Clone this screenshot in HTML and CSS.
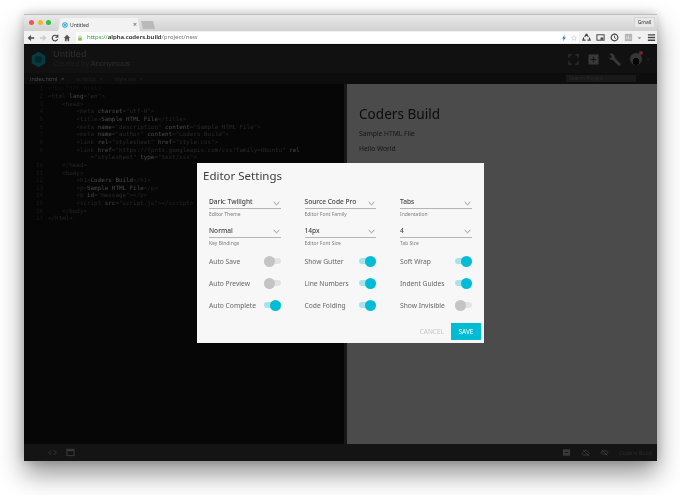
FILE: index.html
```html
<!DOCTYPE html>
<html lang="en">
<head>
<meta charset="utf-8">
<title>Coders Build</title>
<link rel="stylesheet" href="styles.css">
</head>
<body>
<div class="window">
  <div class="tabstrip">
    <div class="lights"><i class="light red"></i><i class="light yellow"></i><i class="light green"></i></div>
    <div class="tab">
      <svg class="favicon" viewBox="0 0 10 10"><circle cx="5" cy="5" r="4.6" fill="#29a9d8"/><circle cx="5" cy="5" r="2.6" fill="none" stroke="#fff" stroke-width="1"/></svg>
      <span class="tab-title">Untitled</span>
      <span class="tab-close">×</span>
    </div>
    <div class="newtab"></div>
    <div class="gmail">Gmail</div>
  </div>
  <div class="toolbar">
    <svg class="nav" viewBox="0 0 10 10"><path d="M9 5H2M5 2 2 5l3 3" fill="none" stroke="#444" stroke-width="1.6"/></svg>
    <svg class="nav" viewBox="0 0 10 10"><path d="M1 5h7M5 2l3 3-3 3" fill="none" stroke="#c8c8c8" stroke-width="1.6"/></svg>
    <svg class="nav" viewBox="0 0 10 10"><path d="M8.300 6.400A3.500 3.500 0 1 1 7.600 2.600M8.500 1v3h-3" fill="none" stroke="#444" stroke-width="1.400"/></svg>
    <svg class="nav" viewBox="0 0 10 10"><path d="M5 1 1 5h1.400v4h2V6.500h1.200V9h2V5H9z" fill="#555"/></svg>
    <div class="url">
      <svg class="lock" viewBox="0 0 10 10"><path d="M3 5V3.400a2 2 0 0 1 4 0V5" fill="none" stroke="#7cb342" stroke-width="1"/><rect x="2" y="4.600" width="6" height="4.800" fill="#8bc34a"/></svg>
      <span class="scheme">https://</span><span class="host">alpha.coders.build</span><span class="path">/project/new</span>
      <span class="url-end">
        <svg class="mini" viewBox="0 0 10 10"><path d="M6 0 2 6h2.400L3.600 10 8 4H5.400z" fill="#1976d2"/></svg>
        <svg class="mini" viewBox="0 0 10 10"><path d="m5 1 1.200 2.700 2.900.3-2.200 1.900.7 2.900L5 7.300 2.400 8.800l.7-2.900L.9 4l2.900-.3z" fill="none" stroke="#bbb" stroke-width=".8"/></svg>
      </span>
    </div>
    <div class="extensions">
      <svg class="ext" viewBox="0 0 10 10"><path d="M5 1 3 4.300M5 1l2 3.300M2 5 1 8h3M8 5l1 3H6" fill="none" stroke="#444" stroke-width="1.300"/></svg>
      <svg class="ext" viewBox="0 0 10 10"><rect x="1" y="2" width="8" height="6" fill="none" stroke="#444" stroke-width="1.100"/><rect x="5" y="5" width="3" height="2.500" fill="#444"/></svg>
      <svg class="ext" viewBox="0 0 10 10"><circle cx="5" cy="5" r="3.700" fill="none" stroke="#444" stroke-width="1.300"/><path d="M5 3v2.300l1.600 1" fill="none" stroke="#444"/></svg>
      <svg class="ext" viewBox="0 0 10 10"><rect x="1" y="1" width="8" height="8" fill="#b4b4b4"/><path d="M3 7V4M5 7V3M7 7V5" stroke="#e2e2e2"/></svg>
      <svg class="ext-caret" viewBox="0 0 6 4"><path d="M1 1h4L3 3.500z" fill="#888"/></svg>
      <svg class="ext" viewBox="0 0 10 10"><path d="M1 2h8M1 5h8M1 8h8" stroke="#444" stroke-width="1.500"/></svg>
    </div>
  </div>
  <div class="app">
    <header class="app-header">
      <svg class="logo" viewBox="0 0 18 18"><path d="M9 .8 16.200 5v8L9 17.200 1.800 13V5z" fill="#083a41"/><circle cx="9" cy="9" r="3.800" fill="#05262b"/></svg>
      <div class="project">
        <div class="project-title">Untitled</div>
        <div class="project-by"><span class="dim">Created by</span> Anonymous</div>
      </div>
      <div class="head-actions">
        <svg class="h-icon" viewBox="0 0 12 12"><path d="M1 4V1h3M8 1h3v3M11 8v3H8M4 11H1V8" fill="none" stroke="#333" stroke-width="1.300"/></svg>
        <svg class="h-icon" viewBox="0 0 12 12"><rect x=".5" y=".5" width="11" height="11" fill="#383838"/><path d="M6 3v6M3 6h6" stroke="#141414" stroke-width="1.200"/></svg>
        <svg class="h-icon wrench" viewBox="0 0 12 12"><path d="M1 .8 3.400 3 3 4.500l-1.500.4L.3 3A3.500 3.500 0 0 0 4.300 6.300L9.200 11.400a1.300 1.300 0 0 0 2-2L6.200 4.400A3.500 3.500 0 0 0 1 .8z" fill="#383838"/></svg>
        <span class="avatar"><i class="dot"></i></span>
        <svg class="h-caret" viewBox="0 0 6 4"><path d="M1 1h4L3 3.500z" fill="#2a2a2a"/></svg>
      </div>
    </header>
    <nav class="filetabs">
      <span class="ft active">index.html <i>×</i></span>
      <span class="ft">script.js <i>×</i></span>
      <span class="ft">style.css <i>×</i></span>
      <span class="searchbox">Search Project</span>
    </nav>
    <main class="workspace">
      <div class="editor">
        <div class="gutter"><span>1</span><span>2</span><span>3</span><span>4</span><span>5</span><span>6</span><span>7</span><span>8</span><span>9</span><span>&nbsp;</span><span>10</span><span>11</span><span>12</span><span>13</span><span>14</span><span>15</span><span>16</span><span>17</span></div>
        <pre class="code"><span class="doctype">&lt;!DOCTYPE html&gt;</span>
<span class="t">&lt;html</span> <b>lang</b><span class="s">="en"</span><span class="t">&gt;</span>
    <span class="t">&lt;head&gt;</span>
        <span class="t">&lt;meta</span> <b>charset</b><span class="s">="utf-8"</span><span class="t">&gt;</span>
        <span class="t">&lt;title&gt;</span><b>Sample HTML File</b><span class="t">&lt;/title&gt;</span>
        <span class="t">&lt;meta</span> <b>name</b><span class="s">="description"</span> <b>content</b><span class="s">="Sample HTML File"</span><span class="t">&gt;</span>
        <span class="t">&lt;meta</span> <b>name</b><span class="s">="author"</span> <b>content</b><span class="s">="Coders Build"</span><span class="t">&gt;</span>
        <span class="t">&lt;link</span> <b>rel</b><span class="s">="stylesheet"</span> <b>href</b><span class="s">="style.css"</span><span class="t">&gt;</span>
        <span class="t">&lt;link</span> <b>href</b><span class="s">="https://fonts.googleapis.com/css?family=Ubuntu"</span> <b>rel</b>
            <span class="s">="stylesheet"</span> <b>type</b><span class="s">="text/css"</span><span class="t">&gt;</span>
    <span class="t">&lt;/head&gt;</span>
    <span class="t">&lt;body&gt;</span>
        <span class="t">&lt;h1&gt;</span><b>Coders Build</b><span class="t">&lt;/h1&gt;</span>
        <span class="t">&lt;p&gt;</span><b>Sample HTML File</b><span class="t">&lt;/p&gt;</span>
        <span class="t">&lt;p</span> <b>id</b><span class="s">="message"</span><span class="t">&gt;&lt;/p&gt;</span>
        <span class="t">&lt;script</span> <b>src</b><span class="s">="script.js"</span><span class="t">&gt;&lt;/script&gt;</span>
    <span class="t">&lt;/body&gt;</span>
<span class="t">&lt;/html&gt;</span></pre>
      </div>
      <div class="preview">
        <h1>Coders Build</h1>
        <p>Sample HTML File</p>
        <p>Hello World</p>
      </div>
    </main>
    <footer class="app-footer">
      <svg class="f-icon" viewBox="0 0 10 10"><path d="M3.500 2.500 1 5l2.500 2.500M6.500 2.500 9 5 6.500 7.500" fill="none" stroke="#3a3a3a" stroke-width="1.100"/></svg>
      <svg class="f-icon" viewBox="0 0 10 10"><rect x="1" y="1.500" width="8" height="7" fill="none" stroke="#3a3a3a" stroke-width="1.100"/><rect x="1" y="1.500" width="8" height="2" fill="#3a3a3a"/></svg>
      <span class="f-right">
        <svg class="f-icon" viewBox="0 0 10 10"><rect x="1" y="1.500" width="8" height="7" fill="#3a3a3a"/><path d="M3 5h4" stroke="#141414"/></svg>
        <svg class="f-icon" viewBox="0 0 10 10"><path d="M2.500 7.800A2 2 0 0 1 2.800 4 2.800 2.800 0 0 1 8 5a1.500 1.500 0 0 1 0 2.800zM2 2l7 7" fill="none" stroke="#3a3a3a" stroke-width=".9"/></svg>
        <svg class="f-icon" viewBox="0 0 10 10"><path d="M.8 5Q5 .8 9.200 5 5 9.200.8 5zM2 2l6.500 6.500" fill="none" stroke="#3a3a3a" stroke-width="1.100"/></svg>
        <span class="f-brand">Coders Build</span>
      </span>
    </footer>
  </div>
  <div class="modal">
    <h2>Editor Settings</h2>
    <div class="fields">
      <div class="field"><div class="select"><span>Dark: Twilight</span><svg viewBox="0 0 8 5"><path d="M.7.8 4 4 7.300.8" fill="none" stroke="#666" stroke-width=".8"/></svg></div><label>Editor Theme</label></div>
      <div class="field"><div class="select"><span>Source Code Pro</span><svg viewBox="0 0 8 5"><path d="M.7.8 4 4 7.300.8" fill="none" stroke="#666" stroke-width=".8"/></svg></div><label>Editor Font Family</label></div>
      <div class="field"><div class="select"><span>Tabs</span><svg viewBox="0 0 8 5"><path d="M.7.8 4 4 7.300.8" fill="none" stroke="#666" stroke-width=".8"/></svg></div><label>Indentation</label></div>
      <div class="field"><div class="select"><span>Normal</span><svg viewBox="0 0 8 5"><path d="M.7.8 4 4 7.300.8" fill="none" stroke="#666" stroke-width=".8"/></svg></div><label>Key Bindings</label></div>
      <div class="field"><div class="select"><span>14px</span><svg viewBox="0 0 8 5"><path d="M.7.8 4 4 7.300.8" fill="none" stroke="#666" stroke-width=".8"/></svg></div><label>Editor Font Size</label></div>
      <div class="field"><div class="select"><span>4</span><svg viewBox="0 0 8 5"><path d="M.7.8 4 4 7.300.8" fill="none" stroke="#666" stroke-width=".8"/></svg></div><label>Tab Size</label></div>
    </div>
    <div class="toggles">
      <div class="opt"><span>Auto Save</span><i class="toggle"></i></div>
      <div class="opt"><span>Show Gutter</span><i class="toggle on"></i></div>
      <div class="opt"><span>Soft Wrap</span><i class="toggle on"></i></div>
      <div class="opt"><span>Auto Preview</span><i class="toggle"></i></div>
      <div class="opt"><span>Line Numbers</span><i class="toggle on"></i></div>
      <div class="opt"><span>Indent Guides</span><i class="toggle on"></i></div>
      <div class="opt"><span>Auto Complete</span><i class="toggle on"></i></div>
      <div class="opt"><span>Code Folding</span><i class="toggle on"></i></div>
      <div class="opt"><span>Show Invisible</span><i class="toggle"></i></div>
    </div>
    <div class="actions"><span class="cancel">CANCEL</span><span class="save">SAVE</span></div>
  </div>
</div>
</body>
</html>
```
FILE: styles.css
```css
* { box-sizing: border-box; }
html, body { margin: 0; height: 100%; background: #fff; overflow: hidden; }
body { padding: 14px 24px 0; font-family: "Noto Sans", sans-serif; }
.window {
  position: relative;
  width: 633px;
  height: 447px;
  display: flex;
  flex-direction: column;
  box-shadow: 0 13px 24px rgba(0,0,0,.42), 0 0 10px rgba(0,0,0,.2);
  border-top: 1px solid #bdbdbd;
  filter: blur(.45px);
}

/* browser chrome */
.tabstrip {
  height: 16px;
  display: flex;
  align-items: flex-end;
  background: linear-gradient(#e9e9e9, #d2d2d2);
}
.lights { display: flex; gap: 3.500px; padding: 0 0 6px 5px; width: 34px; }
.light { width: 5px; height: 5px; border-radius: 50%; flex: none; }
.red { background: #f2544e; }
.yellow { background: #f5b52f; }
.green { background: #2fc13f; }
.tab {
  width: 82px;
  height: 13px;
  display: flex;
  align-items: center;
  gap: 2px;
  padding: 0 3px 0 4px;
  background: #f2f2f2;
  clip-path: polygon(0 100%, 3% 0, 97% 0, 100% 100%);
}
.favicon { width: 6px; height: 6px; flex: none; }
.tab-title { font-size: 5px; color: #333; flex: 1; }
.tab-close { font-size: 7px; color: #555; line-height: 1; }
.newtab {
  width: 14px;
  height: 8px;
  margin: 0 0 2px 1px;
  align-self: flex-end;
  background: #b9b9b9;
  clip-path: polygon(0 0, 86% 0, 100% 100%, 14% 100%);
}
.gmail {
  margin: 0 2px 3px auto;
  width: 21px;
  height: 11px;
  background: #e8e8e8;
  border: 1px solid #d4d4d4;
  font-size: 5px;
  line-height: 9px;
  text-align: center;
  color: #333;
}
.toolbar {
  height: 13px;
  display: flex;
  align-items: center;
  background: #f1f1f1;
  padding-left: 3px;
  gap: 5px;
}
.nav { width: 8px; height: 8px; flex: none; margin-right: -1px; }
.url {
  width: 503px;
  height: 11px;
  margin-left: 1px;
  background: #fff;
  display: flex;
  align-items: center;
  padding-left: 1px;
  font-size: 6px;
  line-height: 11px;
}
.lock { width: 6px; height: 6px; margin: 0 4px 0 0; flex: none; }
.scheme { color: #2e9e3a; }
.host { color: #222; font-weight: 600; }
.path { color: #777; }
.url-end { margin-left: auto; display: flex; gap: 4px; padding-right: 2px; }
.mini { width: 6px; height: 6px; }
.extensions { display: flex; align-items: center; gap: 5px; margin-left: -2px; }
.ext { width: 9px; height: 9px; flex: none; }
.ext-caret { width: 5px; height: 4px; margin-left: -1px; }

/* app */
.app { flex: 1; min-height: 0; display: flex; flex-direction: column; background: #060606; color: #3a3a3a; }
.app-header {
  height: 29px;
  background: #111;
  display: flex;
  align-items: center;
  padding: 0 7px 0 6px;
  border-top: 1px solid #090909;
}
.logo { width: 17px; height: 17px; flex: none; }
.project { margin-left: 6px; font-family: "Liberation Sans", sans-serif; }
.project-title { font-size: 9.200px; line-height: 10.600px; color: #303030; letter-spacing: .3px; }
.project-by { font-size: 7.400px; line-height: 8.600px; color: #2e2e2e; }
.dim { color: #202020; }
.head-actions { margin-left: auto; display: flex; align-items: center; gap: 9px; }
.h-icon { width: 11px; height: 11px; flex: none; }
.wrench { width: 13px; height: 13px; }
.avatar {
  position: relative;
  width: 12px;
  height: 12px;
  border-radius: 50%;
  background: radial-gradient(circle at 50% 70%, #050505 0 32%, #363636 35% 100%);
}
.dot { position: absolute; top: -2px; right: -1px; width: 4px; height: 4px; border-radius: 50%; background: #6e2730; }
.h-caret { width: 4px; height: 3px; margin-left: -5px; }
.filetabs {
  height: 11px;
  background: #0d0d0d;
  display: flex;
  align-items: center;
  gap: 12px;
  padding: 0 21px 0 6px;
  font-size: 5.500px;
  color: #222;
}
.ft i { font-style: normal; margin-left: 2px; }
.ft.active { color: #4a4a4a; }
.searchbox {
  margin-left: auto;
  width: 70px;
  height: 7px;
  padding-left: 3px;
  background: #191919;
  font-size: 5px;
  line-height: 7px;
  color: #2b2b2b;
}
.workspace { flex: 1; min-height: 0; display: flex; }
.editor {
  width: 323px;
  display: flex;
  padding-top: 1.300px;
  font-family: "DejaVu Sans Mono", monospace;
  font-size: 5.900px;
  line-height: 7.660px;
  background: #060606;
  overflow: hidden;
}
.gutter {
  width: 24px;
  flex: none;
  display: flex;
  flex-direction: column;
  align-items: flex-end;
  padding-right: 5px;
  color: #1b1b1b;
}
.code { margin: 0; font: inherit; color: #2c2c2c; white-space: pre; }
.code b { font-weight: 400; color: #4a4a4a; }
.t { color: #242424; }
.s { color: #2a2a2a; }
.doctype { color: #141414; }
.preview {
  flex: 1;
  background: #4b4b4b;
  color: #0d0d0d;
  padding: 20px 12px 0;
  box-shadow: -3px 0 0 #171717;
}
.preview h1 { margin: 0 0 6px; font-size: 13.600px; font-weight: 400; line-height: 19px; color: #0c0c0c; }
.preview p { margin: 0 0 5px; font-size: 6.700px; line-height: 10px; color: #151515; }
.app-footer {
  height: 17px;
  background: #141414;
  display: flex;
  align-items: center;
  gap: 9px;
  padding: 0 5px 0 24px;
}
.f-icon { width: 9px; height: 9px; flex: none; }
.f-right { margin-left: auto; display: flex; align-items: center; gap: 10px; }
.f-brand { font-size: 5.500px; color: #2c2c2c; }

/* modal */
.modal {
  position: absolute;
  left: 173px;
  top: 148px;
  width: 287px;
  height: 180px;
  background: #f7f7f7;
  padding: 6px 3px 0 6px;
  color: #4a4a4a;
}
.modal h2 { margin: 0; font-size: 11.500px; line-height: 14px; font-weight: 400; color: #3d3d3d; }
.fields {
  display: grid;
  grid-template-columns: repeat(3, 71.500px);
  column-gap: 24px;
  row-gap: 6.500px;
  padding: 13px 0 0 6px;
}
.select {
  height: 13px;
  display: flex;
  justify-content: space-between;
  align-items: center;
  border-bottom: 1px solid #b5b5b5;
  font-size: 6.600px;
  font-weight: 500;
  color: #444;
  padding-bottom: 1px;
}
.select svg { width: 7px; height: 5px; margin-right: 1px; margin-top: 3px; }
.field label { display: block; font-size: 5px; line-height: 8px; margin-top: 1px; color: #7d7d7d; }
.toggles {
  display: grid;
  grid-template-columns: repeat(3, 71.500px);
  column-gap: 24px;
  row-gap: 11px;
  padding: 9px 0 0 6px;
}
.opt {
  height: 11px;
  display: flex;
  align-items: center;
  justify-content: space-between;
  font-size: 6.700px;
  color: #666;
}
.toggle {
  position: relative;
  width: 17px;
  height: 6px;
  border-radius: 3px;
  background: #e3e3e3;
  flex: none;
}
.toggle::after {
  content: "";
  position: absolute;
  left: 0;
  top: -2.500px;
  width: 11px;
  height: 11px;
  border-radius: 50%;
  background: #c4c4c4;
}
.toggle.on { background: #a9e3ea; }
.toggle.on::after { left: 6px; background: #00bcd4; }
.actions {
  position: absolute;
  right: 3px;
  bottom: 3px;
  display: flex;
  align-items: center;
  gap: 7px;
}
.cancel { font-size: 6.500px; color: #c4c4c4; }
.save {
  width: 30px;
  height: 17px;
  background: #00bcd4;
  color: #fff;
  font-size: 6.500px;
  line-height: 17px;
  text-align: center;
}
```
